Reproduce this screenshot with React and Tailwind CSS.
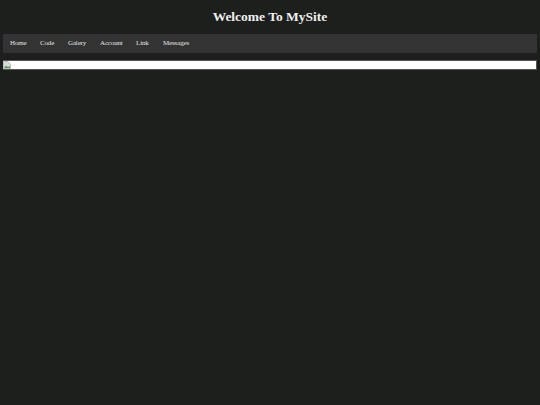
export default function App() {
  const links = [
    ["Home", "w-[30px]"],
    ["Code", "w-[28px]"],
    ["Galery", "w-[32px]"],
    ["Account", "w-[36px]"],
    ["Link", "w-[27px]"],
    ["Messages", "w-[40px]"],
  ];
  return (
    <div className="min-h-[405px] bg-[#1d1f1d] px-[3px] font-['Liberation_Serif',serif]">
      <h1 className="h-[33px] pt-[1px] flex items-center justify-center text-[13.5px] leading-none font-bold text-[#f0f0f0]">Welcome To MySite</h1>
      <nav className="mt-[1px] h-[19px] flex items-center bg-[#333333] rounded-[1px] pl-[7px]">
        {links.map(([l, w]) => (
          <a key={l} className={`${w} text-[7px] tracking-[-0.15px] text-[#e4e4e4]`}>{l}</a>
        ))}
      </nav>
      <div className="mt-[7px] h-[10px] bg-white border border-[#555] border-l-0 flex items-start">
        <svg width="8" height="8" viewBox="0 0 8 8" className="shrink-0">
          <path d="M0.5 0.5H5L7.5 3V7.5H0.5Z" fill="#d8dce0" stroke="#9a9a9a" strokeWidth="0.6" />
          <path d="M1 7L3 4.5L5 6L7 5V7Z" fill="#5a9e4e" />
        </svg>
      </div>
    </div>
  );
}
